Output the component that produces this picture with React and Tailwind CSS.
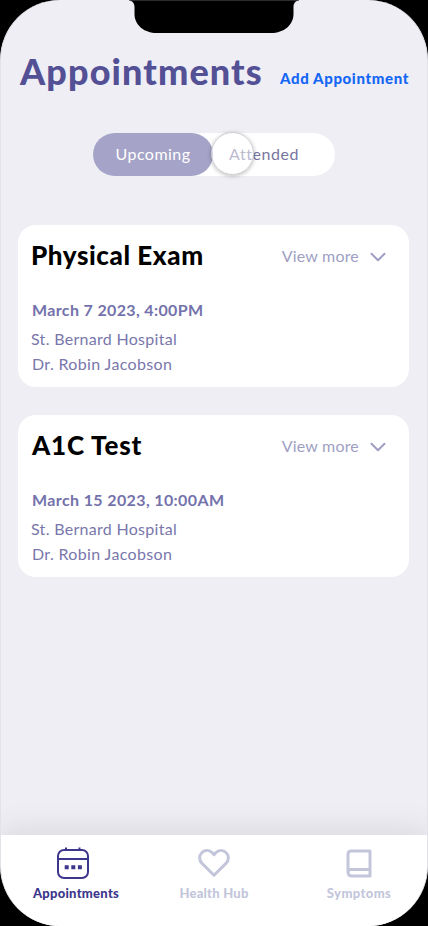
import React from "react";

const appointments = [
  { title: "Physical Exam", date: "March 7 2023, 4:00PM", titleClass: "-ml-px tracking-[0.58px]", dateClass: "tracking-[0.36px]" },
  { title: "A1C Test", date: "March 15 2023, 10:00AM", titleClass: "tracking-[0.8px]", dateClass: "tracking-[0.38px]" },
];

function Notch() {
  return (
    <svg className="absolute -left-px top-0" width="428" height="34" viewBox="0 0 428 34" aria-hidden="true">
      <path d="M129 0H299V0.500C296 0.500 293.500 3 293.500 7V14C293.500 25 284 33 271 33H157C144 33 134.500 25 134.500 14V7C134.500 3 132 0.500 129 0.500Z" fill="#000" />
      <path d="M131 0.500H297" stroke="#2c2c2f" strokeWidth="1" />
    </svg>
  );
}

function AppointmentCard({ title, date, titleClass, dateClass }) {
  return (
    <article className="h-[162px] rounded-[18px] bg-white pl-[14px] pr-[23px] pt-3">
      <div className="flex h-9 items-center justify-between">
        <h2 className={"whitespace-nowrap text-[26px] font-black leading-9 text-black " + titleClass}>{title}</h2>
        <button className="mt-[2px] flex items-center gap-[11px] text-[#a09fc3]">
          <span className="whitespace-nowrap text-[16px] leading-6 tracking-[0.2px]">View more</span>
          <svg className="mt-[2px]" width="16" height="10" viewBox="0 0 16 10" fill="none" aria-hidden="true">
            <path d="M1.500 1.800L8 8.300L14.500 1.800" stroke="currentColor" strokeWidth="2" strokeLinecap="round" strokeLinejoin="round" />
          </svg>
        </button>
      </div>
      <p className={"mt-[25px] whitespace-nowrap text-[16px] font-bold leading-6 text-[#7472ab] " + dateClass}>{date}</p>
      <p className="-ml-px mt-[5px] whitespace-nowrap text-[16px] leading-6 tracking-[0.3px] text-[#7977ab]">St. Bernard Hospital</p>
      <p className="mt-px whitespace-nowrap text-[16px] leading-6 tracking-[0.36px] text-[#7977ab]">Dr. Robin Jacobson</p>
    </article>
  );
}

function CalendarIcon() {
  return (
    <svg className="mr-[7px]" width="34" height="34" viewBox="0 0 34 34" fill="none" stroke="currentColor" strokeWidth="2" aria-hidden="true">
      <rect x="2" y="4" width="30" height="28" rx="6" />
      <path d="M2 13H32M10 1.500V5M23.500 1.500V5" />
      <path d="M8.700 21.300H12.700M15.300 21.300H19.300M21.900 21.300H25.900" strokeWidth="4" />
    </svg>
  );
}

function HeartIcon() {
  return (
    <svg width="34" height="34" viewBox="0 0 34 34" fill="none" stroke="currentColor" strokeWidth="3" strokeLinejoin="round" aria-hidden="true">
      <path d="M17 8.600L15.300 6.800C12.200 3.700 7.900 3.700 5 6.500C1.900 9.600 1.900 14.300 5 17.400L17 29.300L29 17.400C32.100 14.300 32.100 9.600 29 6.500C26.100 3.700 21.800 3.700 18.700 6.800Z" />
    </svg>
  );
}

function BookIcon() {
  return (
    <svg width="34" height="34" viewBox="0 0 34 34" fill="none" stroke="currentColor" strokeWidth="3" strokeLinejoin="round" aria-hidden="true">
      <path d="M28 5H9C7 5 6 6.500 6 8.500V26C6 28.500 7.500 30 10 30H28ZM6 26C6 24.200 7.200 23.500 9 23.500H28" />
    </svg>
  );
}

export default function App() {
  return (
    <div className="h-[926px] w-[428px] overflow-hidden bg-black font-['Lato',sans-serif]">
      <div className="relative flex h-full flex-col overflow-hidden rounded-[60px] border-x border-[#e3e2e8] bg-[#efeef4]">
        <header className="flex h-[133px] items-start justify-between pl-[19px] pr-[18px] pt-[49px]">
          <h1 className="whitespace-nowrap text-[36px] font-black leading-[44px] tracking-[1.1px] text-[#535095]">Appointments</h1>
          <button className="mt-[17px] whitespace-nowrap text-[15px] font-black leading-6 tracking-[0.63px] text-[#1466f5]">Add Appointment</button>
        </header>

        <div className="relative ml-[92px] flex h-[43px] w-[242px] shrink-0 rounded-full bg-white">
          <div className="w-[120px] rounded-full bg-[#a5a3c7] text-center text-[16px] leading-[42px] tracking-[0.45px] text-white">Upcoming</div>
          <div className="pl-4 text-[16px] leading-[42px] tracking-[0.55px] text-[#77759f]">Attended</div>
          <div className="absolute left-[118px] top-[-1px] size-[43px] rounded-full border border-[#cccbd2] bg-white/50 shadow-[0_1px_4px_rgba(0,0,0,0.28)]" />
        </div>

        <main className="mt-[49px] flex flex-1 flex-col gap-7 pl-[17px] pr-[18px]">
          {appointments.map((a) => <AppointmentCard key={a.title} {...a} />)}
        </main>

        <nav className="flex h-[91px] shrink-0 bg-white pt-[11px] text-[13px] font-black text-[#c3c6db] shadow-[0_-4px_28px_rgba(60,60,80,0.13)]">
          <div className="flex w-[150px] shrink-0 flex-col items-center text-[#3c378b]"><CalendarIcon /><span className="mt-[3px] leading-5 tracking-[0.27px]">Appointments</span></div>
          <div className="flex w-[126px] shrink-0 flex-col items-center"><HeartIcon /><span className="mt-[3px] leading-5 tracking-[0.23px]">Health Hub</span></div>
          <div className="flex w-[164px] shrink-0 flex-col items-center"><BookIcon /><span className="mt-[3px] leading-5 tracking-[0.4px]">Symptoms</span></div>
        </nav>
        <Notch />
      </div>
    </div>
  );
}
